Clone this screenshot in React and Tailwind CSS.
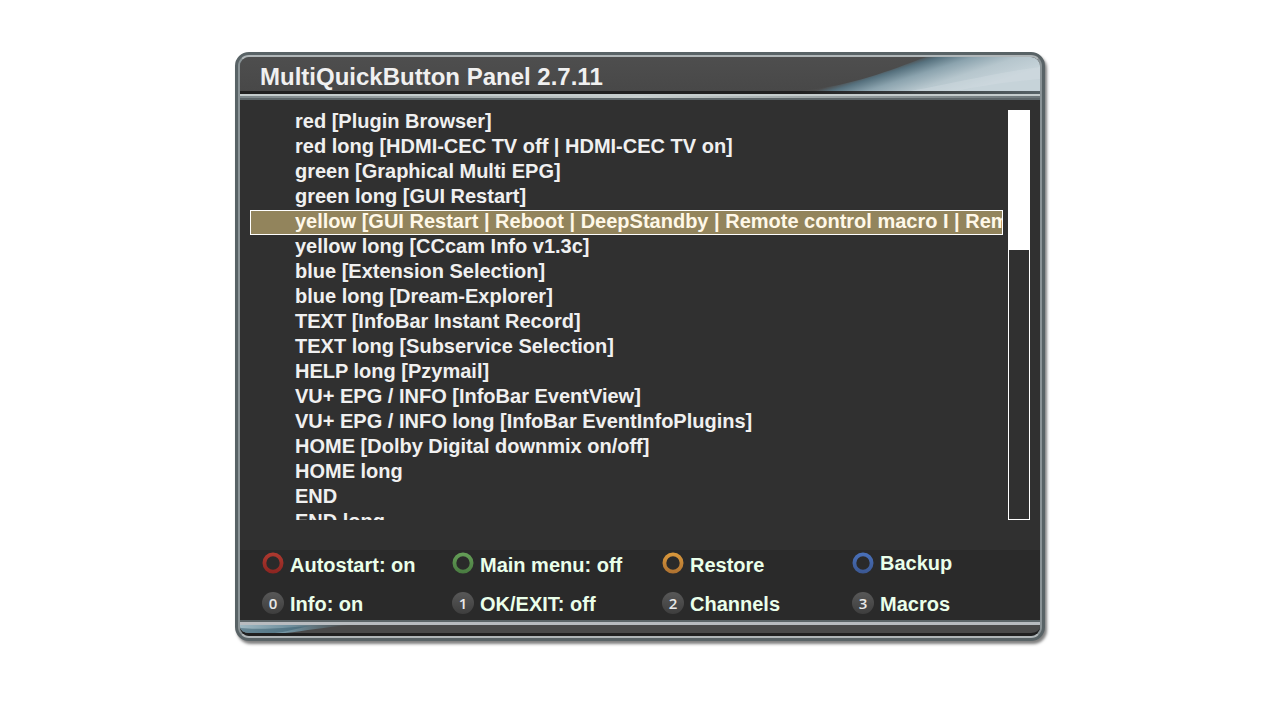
const entries = [
  "red [Plugin Browser]",
  "red long [HDMI-CEC TV off | HDMI-CEC TV on]",
  "green [Graphical Multi EPG]",
  "green long [GUI Restart]",
  "yellow [GUI Restart | Reboot | DeepStandby | Remote control macro I | Remote control macro II]",
  "yellow long [CCcam Info v1.3c]",
  "blue [Extension Selection]",
  "blue long [Dream-Explorer]",
  "TEXT [InfoBar Instant Record]",
  "TEXT long [Subservice Selection]",
  "HELP long [Pzymail]",
  "VU+ EPG / INFO [InfoBar EventView]",
  "VU+ EPG / INFO long [InfoBar EventInfoPlugins]",
  "HOME [Dolby Digital downmix on/off]",
  "HOME long",
  "END",
  "END long",
]

const selected = 4

const colorKeys = [
  { label: "Autostart: on", from: "#b03a30", to: "#8a2420", leading: "leading-[26px]" },
  { label: "Main menu: off", from: "#66a058", to: "#487a40", leading: "leading-[26px]" },
  { label: "Restore", from: "#dc9a3c", to: "#ac7030", leading: "leading-[26px]" },
  { label: "Backup", from: "#4a72bc", to: "#3a5690", leading: "leading-[22px]" },
]

const numberKeys = ["Info: on", "OK/EXIT: off", "Channels", "Macros"]

const Ring = ({ id, from, to }) => (
  <svg className="h-[22px] w-[22px]" viewBox="0 0 22 22" aria-hidden="true">
    <defs>
      <linearGradient id={id} gradientUnits="userSpaceOnUse" x1="0" y1="0" x2="0" y2="22">
        <stop offset="0" stopColor={from} />
        <stop offset="1" stopColor={to} />
      </linearGradient>
    </defs>
    <circle cx="11" cy="11" r="8.6" fill="none" stroke={`url(#${id})`} strokeWidth="3.8" />
  </svg>
)

const Header = () => (
  <header className="relative h-[34px] overflow-hidden rounded-t-[9px] bg-gradient-to-b from-[#4e4e4e] to-[#484848]">
    <svg className="absolute inset-y-0 right-0 h-[34px] w-[260px]" viewBox="0 0 260 34" preserveAspectRatio="none" aria-hidden="true">
      <defs>
        <linearGradient id="shine" gradientUnits="userSpaceOnUse" x1="84" y1="18" x2="98" y2="62">
          <stop offset="0" stopColor="#4c4c4c" />
          <stop offset="0.12" stopColor="#56717e" />
          <stop offset="0.35" stopColor="#8ba3ae" />
          <stop offset="0.65" stopColor="#b6c6cd" />
          <stop offset="1" stopColor="#c6d3d9" />
        </linearGradient>
      </defs>
      <path d="M20 34 C75 28 108 14 146 0 L260 0 L260 34 Z" fill="url(#shine)" />
      <path d="M130 34 C175 26 215 16 260 10 L260 22 C225 25 200 29 175 34 Z" fill="#d6e0e4" opacity="0.35" />
    </svg>
    <h1 className="relative pl-[20px] text-[24px] leading-[40px] font-bold text-[#f0f0f0]">MultiQuickButton Panel 2.7.11</h1>
  </header>
)

const App = () => {
  return (
    <main className="min-h-screen bg-white px-4 pt-[52px] font-['Liberation_Sans',sans-serif]">
      <div className="mx-auto max-w-[810px] rounded-[14px] border-[3px] border-[#596366] bg-[#596366] shadow-[2px_3px_3px_#00000080]">
        <div className="rounded-[11px] border-2 border-x-[#8a9396] border-y-[#b0b6b8]">
          <Header />
          <div className="h-[3px] bg-gradient-to-r from-[#202020] via-[#202020] via-70% to-[#566266]" />
          <div className="h-[2px] bg-[#c4cccc]" />
          <div className="h-[2px] bg-gradient-to-r from-[#7c8689] via-[#c8cfce] to-[#6b7578]" />
          <section className="border-y-2 border-[#5c6568] bg-[#303030]">
            <div className="flex h-[420px] gap-[5px] pt-[10px] pr-[10px] pl-[10px]">
              <ul className="h-[410px] min-w-0 flex-1 overflow-hidden text-[20px] leading-[21px] font-bold text-[#f0f0f0]">
                {entries.map((entry, i) => (
                  <li key={entry} className={i === selected ? "h-[25px] overflow-hidden border border-white bg-[#92845c] pl-[44px] whitespace-nowrap text-[#fff8e8]" : "h-[25px] overflow-hidden border border-transparent pl-[44px] whitespace-nowrap"}>{entry}</li>
                ))}
              </ul>
              <div className="h-[410px] w-[22px] border border-white">
                <div className="h-[139px] bg-white" />
              </div>
            </div>
            <div className="mt-[30px] bg-[#2a2a2a] px-[22px] pt-[2px] pb-[4px] text-[20px] font-bold text-[#eaffea]">
              <div className="grid h-[40px] grid-cols-[190px_210px_190px_1fr]">
                {colorKeys.map((key) => (
                  <button key={key.label} className="flex items-start gap-[6px]">
                    <Ring id={key.label[0]} from={key.from} to={key.to} />
                    <span className={key.leading}>{key.label}</span>
                  </button>
                ))}
              </div>
              <div className="grid grid-cols-[190px_210px_190px_1fr]">
                {numberKeys.map((label, i) => (
                  <button key={label} className="flex items-start gap-[6px] leading-[24px]">
                    <span className="h-[22px] w-[22px] rounded-full bg-gradient-to-b from-[#585858] to-[#3e3e3e] font-['Open_Sans',sans-serif] text-[15px] leading-[22px] font-semibold text-[#e8e8e8]">{i}</span>
                    {label}
                  </button>
                ))}
              </div>
            </div>
          </section>
          <footer className="h-[14px] overflow-hidden rounded-b-[9px] border-t-[3px] border-b-[3px] border-t-[#b8bcc0] border-b-[#202020] bg-[#4a4a4a]">
            <svg className="h-[8px] w-[110px]" viewBox="0 0 110 8" preserveAspectRatio="none" aria-hidden="true">
              <defs>
                <linearGradient id="glow" x1="0" y1="0" x2="1" y2="0">
                  <stop offset="0" stopColor="#9fb8c2" />
                  <stop offset="0.45" stopColor="#6f909e" />
                  <stop offset="1" stopColor="#4a4a4a" />
                </linearGradient>
              </defs>
              <path d="M0 0 L110 0 C85 2 65 6 45 8 L0 8 Z" fill="url(#glow)" />
              <path d="M0 3 C25 5 40 3 70 1 C55 4 45 7 35 8 L0 8 Z" fill="#3f6474" opacity="0.6" />
            </svg>
          </footer>
        </div>
      </div>
    </main>
  )
}

export default App
